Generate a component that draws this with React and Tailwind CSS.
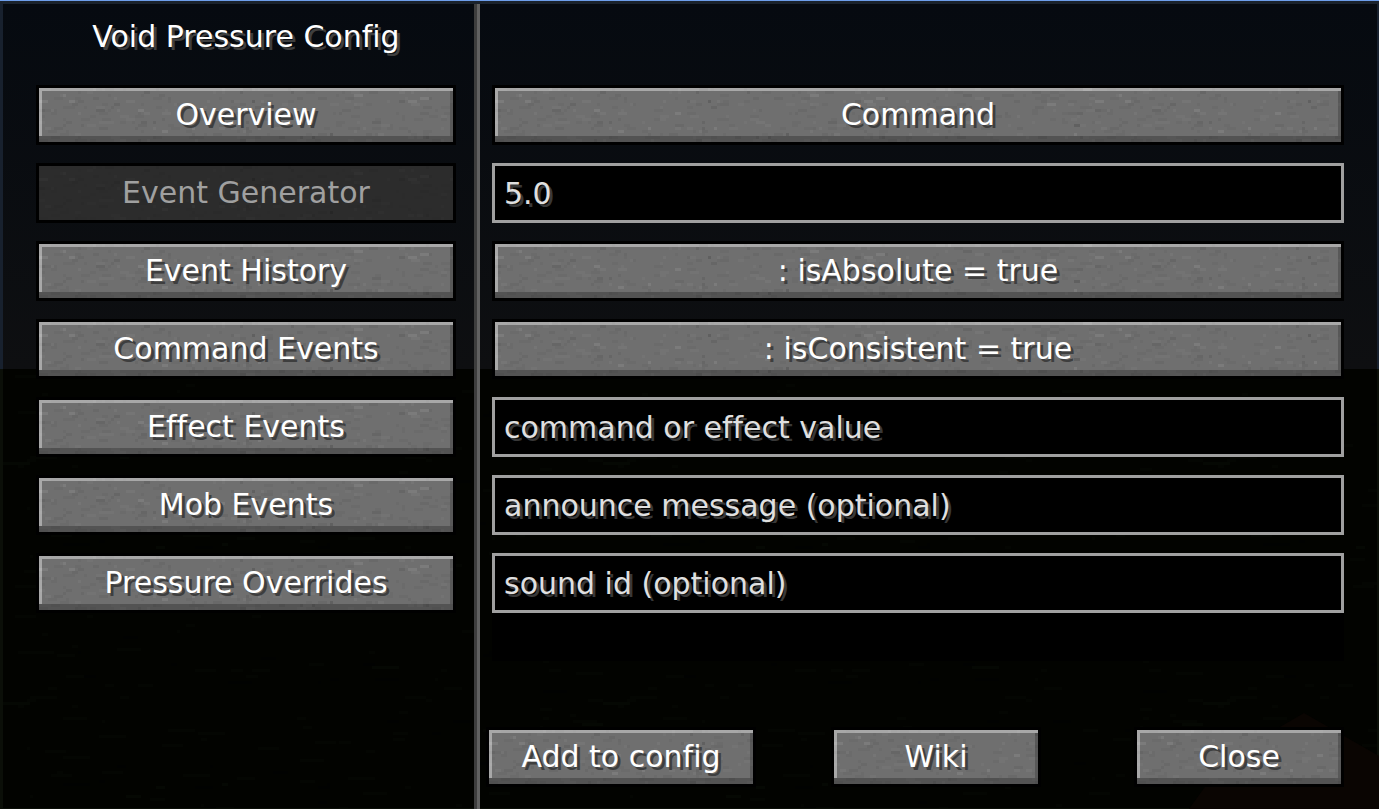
// src/App.jsx
import React, { useState } from 'react';

const tabs = [
  'Overview',
  'Event Generator',
  'Event History',
  'Command Events',
  'Effect Events',
  'Mob Events',
  'Pressure Overrides',
];

// Fixed seed so every button gets the same stone texture
function makeSpecks(count, columns, rows, maxWidth, shades) {
  let seed = 41;
  const next = () => {
    seed = (seed * 16807) % 2147483647;
    return seed / 2147483647;
  };
  return Array.from({ length: count }, () => ({
    x: Math.floor(next() * columns) * 3,
    y: Math.floor(next() * rows) * 3,
    width: (1 + Math.floor(next() * maxWidth)) * 3,
    fill: shades[Math.floor(next() * next() * shades.length)],
  }));
}

const stone = makeSpecks(380, 200, 18, 3, [
  '#6b6b6b',
  '#737373',
  '#696969',
  '#757575',
  '#666666',
  '#7b7b7b',
  '#606060',
]);
const grass = makeSpecks(160, 200, 80, 9, ['#040602', '#010201', '#050803']);

function Specks({ specks }) {
  return specks.map((s, i) => (
    <rect key={i} x={s.x} y={s.y} width={s.width} height="3" fill={s.fill} />
  ));
}

function StoneTexture({ id }) {
  return (
    <svg className="absolute inset-0 h-full w-full" shapeRendering="crispEdges" aria-hidden="true">
      <defs>
        <pattern id={id} width="600" height="54" patternUnits="userSpaceOnUse">
          <rect width="600" height="54" fill="#6f6f6f" />
          <Specks specks={stone} />
        </pattern>
      </defs>
      <rect width="100%" height="100%" fill={`url(#${id})`} />
    </svg>
  );
}

function StoneButton({ children, className = 'w-full', disabled = false, onClick }) {
  const id = React.useId();

  return (
    <button
      type="button"
      disabled={disabled}
      onClick={onClick}
      className={`relative h-[60px] shrink-0 border-3 border-black ${className}`}
    >
      <StoneTexture id={id} />
      {disabled ? (
        <span className="absolute inset-0 bg-black/60" />
      ) : (
        <span className="absolute inset-0 flex flex-col">
          <span className="h-[3px] bg-white/40" />
          <span className="flex-1 border-r-3 border-l-3 border-r-black/20 border-l-white/40" />
          <span className="h-1.5 bg-black/25" />
        </span>
      )}
      <span
        className={
          disabled
            ? 'relative text-[#a0a0a0]'
            : 'relative text-white [text-shadow:3px_3px_0_#3e3e3e]'
        }
      >
        {children}
      </span>
    </button>
  );
}

function ConfigInput({ label, ...props }) {
  return (
    <input
      type="text"
      aria-label={label}
      className="h-[60px] w-full border-3 border-[#a0a0a0] bg-black px-[9px] text-[#e0e0e0] outline-none [text-shadow:3px_3px_0_#383838] placeholder:text-[#e0e0e0] placeholder:opacity-100"
      {...props}
    />
  );
}

function Backdrop() {
  return (
    <div className="absolute inset-0 flex flex-col overflow-hidden border-t-3 border-[#1a222c]">
      <div className="h-[365px] border-r-2 border-l-3 border-[#18212e] bg-linear-to-b from-[#060a10] to-[#0e0f11]" />
      <div className="flex-1 border-r-2 border-b border-l-3 border-[#0b0f08] bg-[#020300]">
        <svg className="h-full w-full" shapeRendering="crispEdges" aria-hidden="true">
          <defs>
            <pattern id="grass" width="600" height="240" patternUnits="userSpaceOnUse">
              <Specks specks={grass} />
            </pattern>
          </defs>
          <rect width="100%" height="100%" fill="url(#grass)" />
        </svg>
      </div>
      <svg className="absolute right-0 bottom-0 h-[96px] w-[190px]" viewBox="0 0 190 96" aria-hidden="true">
        <path d="M0 96 L36 46 L115 0 L190 43 V96 Z" fill="#0a0502" />
      </svg>
    </div>
  );
}

function App() {
  const [activeTab, setActiveTab] = useState('Event Generator');
  const [isAbsolute, setIsAbsolute] = useState(true);
  const [isConsistent, setIsConsistent] = useState(true);

  return (
    <div className="relative flex min-h-screen border-t border-[#6d9eeb] bg-[#020300] font-['DejaVu_Sans',sans-serif] text-[30px] leading-8 [font-variant-ligatures:none]">
      <Backdrop />

      <nav className="relative flex w-[474px] shrink-0 flex-col gap-[18px] pr-[18px] pl-9">
        <h1 className="mt-5 mb-3.5 text-center text-white [text-shadow:3px_3px_0_#3e3e3e]">
          Void Pressure Config
        </h1>
        {tabs.map((tab) => (
          <StoneButton key={tab} disabled={tab === activeTab} onClick={() => setActiveTab(tab)}>
            {tab}
          </StoneButton>
        ))}
      </nav>

      <div className="relative mt-[3px] w-1.5 shrink-0 border-r-3 border-[#616161] bg-[#3d3d3d]" />

      <main className="relative flex flex-1 flex-col pt-[84px] pr-[35px] pb-[22px] pl-1.5">
        <div className="ml-1.5 flex flex-col gap-[18px]">
          <StoneButton>Command</StoneButton>
          <ConfigInput label="Pressure" defaultValue="5.0" />
          <StoneButton onClick={() => setIsAbsolute(!isAbsolute)}>
            {`: isAbsolute = ${isAbsolute}`}
          </StoneButton>
          <StoneButton onClick={() => setIsConsistent(!isConsistent)}>
            {`: isConsistent = ${isConsistent}`}
          </StoneButton>
          <ConfigInput label="Value" placeholder="command or effect value" />
          <ConfigInput label="Announce message" placeholder="announce message (optional)" />
          <ConfigInput label="Sound id" placeholder="sound id (optional)" />
        </div>
        <div className="ml-1.5 h-12 bg-black" />

        <div className="mt-auto flex justify-between">
          <StoneButton className="w-[270px]">Add to config</StoneButton>
          <div className="flex gap-[93px]">
            <StoneButton className="w-[210px]">Wiki</StoneButton>
            <StoneButton className="w-[210px]">Close</StoneButton>
          </div>
        </div>
      </main>
    </div>
  );
}

export default App;
